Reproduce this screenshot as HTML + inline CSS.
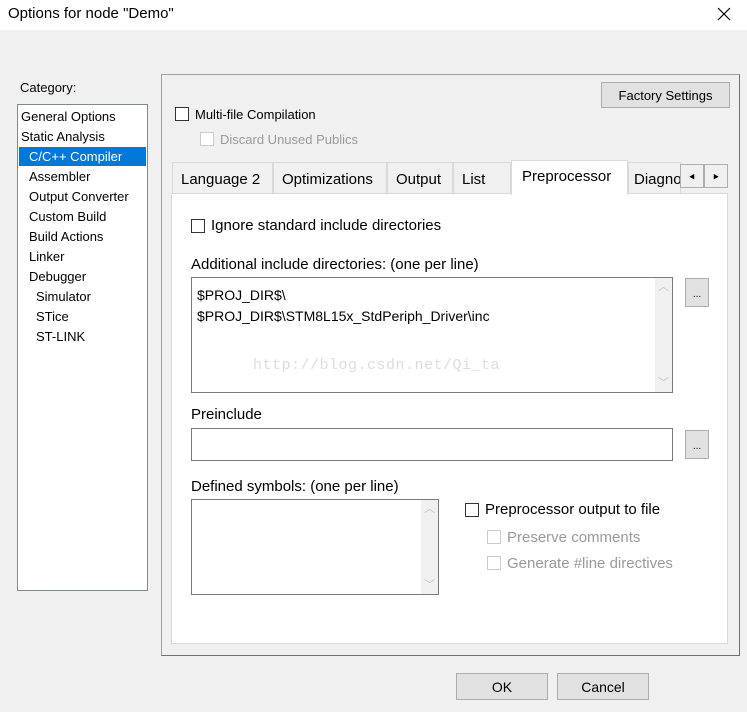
<!DOCTYPE html>
<html><head><meta charset="utf-8"><style>
*{margin:0;padding:0;box-sizing:border-box}
body{width:747px;height:712px;background:#f0f0f0;font-family:"Liberation Sans","Noto Sans CJK SC",sans-serif;font-size:13px;color:#000;position:relative;overflow:hidden}
.a{position:absolute;white-space:nowrap}
.cb{position:absolute;width:14px;height:14px;border:1px solid #333;background:#fff}
.cbd{border-color:#ccc}
.btn{position:absolute;background:#e1e1e1;border:1px solid #adadad;text-align:center}
.t{font-size:15px}
.dis{color:#999}
.tab{position:absolute;top:162px;height:31px;border:1px solid #d9d9d9;border-bottom:none;background:#f0f0f0;font-size:15px;padding:8px 0 0 8px}
.box{position:absolute;background:#fff;border:1px solid #7a7a7a}
.sb{position:absolute;right:0;top:0;bottom:0;width:17px;background:#f0f0f0;color:#c0c0c0;font-size:11px;text-align:center}
</style></head><body>
<div class="a" style="left:0;top:0;width:747px;height:30px;background:#fff"></div>
<div class="a" style="left:8px;top:5px;font-size:15px">Options for node "Demo"</div>
<svg class="a" style="left:716px;top:6px" width="16" height="16"><path d="M2 2L14 14M14 2L2 14" stroke="#000" stroke-width="1.2"/></svg>
<div class="a" style="left:20px;top:80px">Category:</div>
<div class="a" style="left:17px;top:104px;width:131px;height:487px;background:#fff;border:1px solid #828790"></div>
<div class="a" style="left:19px;top:147px;width:127px;height:19px;background:#0078d7"></div>
<div class="a" style="left:21px;top:107px;line-height:20px">General Options<br>Static Analysis<br><span style="color:#fff;padding-left:8px">C/C++ Compiler</span><br><span style="padding-left:8px">Assembler</span><br><span style="padding-left:8px">Output Converter</span><br><span style="padding-left:8px">Custom Build</span><br><span style="padding-left:8px">Build Actions</span><br><span style="padding-left:8px">Linker</span><br><span style="padding-left:8px">Debugger</span><br><span style="padding-left:15px">Simulator</span><br><span style="padding-left:15px">STice</span><br><span style="padding-left:15px">ST-LINK</span></div>
<div class="a" style="left:161px;top:74px;width:579px;height:582px;border:1px solid #a0a0a0;border-right-color:#707070;border-bottom-color:#707070"></div>
<div class="btn" style="left:601px;top:82px;width:129px;height:26px;padding-top:5px">Factory Settings</div>
<div class="cb" style="left:175px;top:107px"></div>
<div class="a" style="left:195px;top:107px">Multi-file Compilation</div>
<div class="cb cbd" style="left:200px;top:132px"></div>
<div class="a dis" style="left:220px;top:132px">Discard Unused Publics</div>
<div class="a" style="left:171px;top:193px;width:557px;height:451px;background:#fff;border:1px solid #d9d9d9"></div>
<div class="tab" style="left:172px;width:101px">Language 2</div>
<div class="tab" style="left:273px;width:114px">Optimizations</div>
<div class="tab" style="left:387px;width:66px">Output</div>
<div class="tab" style="left:453px;width:58px">List</div>
<div class="tab" style="left:511px;top:160px;height:35px;width:117px;background:#fff;padding-top:7px;padding-left:10px">Preprocessor</div>
<div class="tab" style="left:628px;width:53px;overflow:hidden;padding-left:5px">Diagnostics</div>
<div class="btn" style="left:680px;top:164px;width:24px;height:24px;font-size:6px;padding-top:7px;background:#f0f0f0">◀</div>
<div class="btn" style="left:704px;top:164px;width:24px;height:24px;font-size:6px;padding-top:7px;background:#f0f0f0">▶</div>
<div class="cb" style="left:191px;top:219px"></div>
<div class="a t" style="left:211px;top:217px;width:255px;overflow:hidden">Ignore standard include directories</div>
<div class="a t" style="left:191px;top:256px">Additional include directories: (one per line)</div>
<div class="box" style="left:191px;top:277px;width:482px;height:116px"><div class="sb">︿<div style="position:absolute;bottom:2px;width:17px">﹀</div></div></div>
<div class="a" style="left:197px;top:285px;font-size:14px;line-height:21px">$PROJ_DIR$\<br>$PROJ_DIR$\STM8L15x_StdPeriph_Driver\inc</div>
<div class="a" style="left:253px;top:357px;font-family:'Liberation Mono',monospace;font-size:15px;letter-spacing:0.5px;color:#ddd">http://blog.csdn.net/Qi_ta</div>
<div class="btn" style="left:685px;top:278px;width:24px;height:29px;font-size:10px;padding-top:10px">...</div>
<div class="a t" style="left:191px;top:406px">Preinclude</div>
<div class="box" style="left:191px;top:428px;width:482px;height:33px"></div>
<div class="btn" style="left:685px;top:430px;width:24px;height:29px;font-size:10px;padding-top:10px">...</div>
<div class="a t" style="left:191px;top:478px">Defined symbols: (one per line)</div>
<div class="box" style="left:191px;top:499px;width:248px;height:96px"><div class="sb">︿<div style="position:absolute;bottom:2px;width:17px">﹀</div></div></div>
<div class="cb" style="left:465px;top:503px"></div>
<div class="a t" style="left:485px;top:501px">Preprocessor output to file</div>
<div class="cb cbd" style="left:487px;top:530px"></div>
<div class="a t dis" style="left:507px;top:529px">Preserve comments</div>
<div class="cb cbd" style="left:487px;top:556px"></div>
<div class="a t dis" style="left:507px;top:555px">Generate #line directives</div>
<div class="btn" style="left:456px;top:673px;width:92px;height:27px;padding-top:5px;font-size:14px">OK</div>
<div class="btn" style="left:557px;top:673px;width:92px;height:27px;padding-top:5px;font-size:14px">Cancel</div>
</body></html>
